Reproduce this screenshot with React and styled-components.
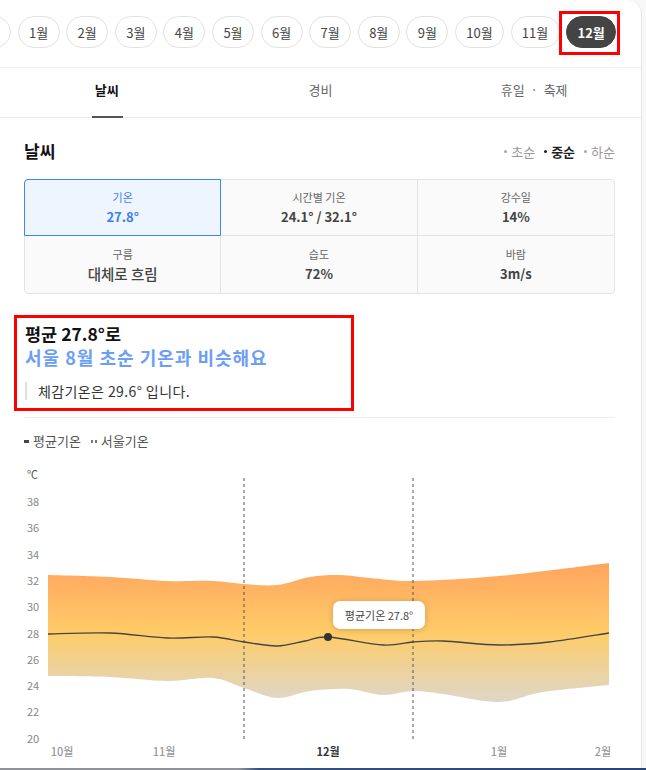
import styled, { createGlobalStyle } from 'styled-components';

const GlobalStyle = createGlobalStyle`
  html, body {
    margin: 0;
    padding: 0;
    background: #f8f8f8;
  }
  body {
    font-family: "Noto Sans CJK KR", "Noto Sans", sans-serif;
    color: #333;
  }
`

const Page = styled.div`
  width: 646px;
  height: 770px;
  overflow: hidden;
  display: flex;
  flex-direction: column;
`

const Card = styled.div`
  width: 641px;
  height: 768px;
  background: #fff;
  border-right: 1px solid #e4e4e4;
  border-top-right-radius: 14px;
  overflow: hidden;
`

const TaskLine = styled.div`
  height: 2px;
  background: linear-gradient(90deg, #8d9399 0%, #8d9399 37%, #35527f 40%, #27457a 100%);
`

const MonthBar = styled.div`
  display: flex;
  gap: 6.6px;
  padding: 16px 0 19px;
  margin-left: -31px;
  border-bottom: 1px solid #efefef;
  white-space: nowrap;
`

const Pill = styled.div`
  position: relative;
  flex: none;
  width: ${p => p.$w}px;
  height: 32px;
  box-sizing: border-box;
  border-radius: 16px;
  border: 1px solid ${p => (p.$on ? '#444' : '#e2e2e2')};
  background: ${p => (p.$on ? '#444' : '#fff')};
  color: ${p => (p.$on ? '#fff' : '#444')};
  font-size: 13px;
  font-weight: ${p => (p.$on ? 700 : 400)};
  display: flex;
  align-items: center;
  justify-content: center;
  line-height: 1;
`

const Mark = styled.span`
  position: absolute;
  left: -8px;
  right: -5px;
  top: -6px;
  bottom: -8px;
  border: 3px solid #f00;
  pointer-events: none;
`

const Tabs = styled.div`
  display: grid;
  grid-template-columns: repeat(3, 1fr);
  height: 49px;
  border-bottom: 1px solid #ececec;
`

const Tab = styled.div`
  position: relative;
  display: flex;
  align-items: center;
  justify-content: center;
  font-size: 13px;
  line-height: 1;
  padding-bottom: 6px;
  color: ${p => (p.$on ? '#111' : '#666')};
  font-weight: ${p => (p.$on ? 700 : 400)};

  &::after {
    content: '';
    display: ${p => (p.$on ? 'block' : 'none')};
    position: absolute;
    bottom: -1px;
    left: 50%;
    width: 31px;
    margin-left: -15px;
    height: 2px;
    background: #555;
  }
`

const Content = styled.div`
  padding: 0 26px 0 24px;
`

const HeadRow = styled.div`
  display: flex;
  align-items: center;
  justify-content: space-between;
  margin-top: 22px;
  height: 22px;
`

const Heading = styled.h2`
  margin: 0;
  font-size: 17px;
  font-weight: 700;
  color: #111;
  line-height: 22px;
`

const Periods = styled.div`
  display: flex;
  gap: 9px;
  font-size: 13px;
  line-height: 1;
`

const Period = styled.span`
  display: flex;
  align-items: center;
  gap: 4px;
  color: ${p => (p.$on ? '#222' : '#999')};
  font-weight: ${p => (p.$on ? 700 : 400)};

  &::before {
    content: '';
    width: 3px;
    height: 3px;
    border-radius: 50%;
    background: ${p => (p.$on ? '#222' : '#aaa')};
  }
`

const Table = styled.div`
  margin-top: 17px;
  display: grid;
  grid-template-columns: repeat(3, 1fr);
  grid-template-rows: 56px 57px;
  border: 1px solid #e3e3e3;
  border-radius: 4px;
  background: #fafafa;
`

const Cell = styled.div`
  display: flex;
  flex-direction: column;
  align-items: center;
  justify-content: center;
  gap: 4px;
  border-right: ${p => (p.$lastCol ? 'none' : '1px solid #e3e3e3')};
  border-bottom: ${p => (p.$lastRow ? 'none' : '1px solid #e3e3e3')};
  ${p => p.$on && `
    margin: -1px 0 0 -1px;
    border: 1px solid #3d86f5;
    border-top-left-radius: 4px;
    background: #eef5ff;
  `}
`

const Label = styled.span`
  font-size: 11px;
  line-height: 14px;
  color: ${p => (p.$on ? '#3d7ef0' : '#666')};
`

const Value = styled.span`
  font-size: ${p => (p.$big ? '14.5px' : '13px')};
  font-weight: ${p => (p.$big ? 500 : 700)};
  line-height: 17px;
  color: ${p => (p.$on ? '#3d7ef0' : '#444')};
`

const Summary = styled.div`
  margin: 21px 0 0 -10px;
  width: 340px;
  box-sizing: border-box;
  border: 3px solid #f00;
  padding: 5px 8px 8px;
`

const Title = styled.div`
  font-size: 17.5px;
  font-weight: 700;
  line-height: 22px;
  color: #111;
`

const Sub = styled.div`
  font-size: 18px;
  font-weight: 700;
  line-height: 24px;
  letter-spacing: 1px;
  color: #6d9ef6;
`

const Quote = styled.div`
  margin-top: 13px;
  font-size: 14px;
  line-height: 18px;
  letter-spacing: 0.4px;
  color: #333;
  border-left: 2px solid #dedede;
  padding-left: 11px;
`

const Divider = styled.div`
  margin-top: 6px;
  height: 1px;
  background: #ededed;
`

const Legend = styled.div`
  margin-top: 16px;
  display: flex;
  align-items: center;
  gap: 10px;
  font-size: 13px;
  line-height: 14px;
  color: #555;
`

const LegendItem = styled.span`
  display: flex;
  align-items: center;
  gap: 4px;
`

const Swatch = styled.span`
  display: inline-block;
  width: ${p => (p.$dots ? '6px' : '5px')};
  height: 3px;
  background: ${p => (p.$dots
    ? 'repeating-linear-gradient(90deg, #777 0 2px, transparent 2px 4px)'
    : '#444')};
`

const ChartWrap = styled.div`
  position: relative;
  margin-top: 11px;
  height: 308px;
`

const Tooltip = styled.div`
  position: absolute;
  left: 333px;
  top: 142px;
  width: 92px;
  height: 28px;
  border-radius: 7px;
  background: #fff;
  box-shadow: 0 1px 6px rgba(0, 0, 0, 0.18);
  display: flex;
  align-items: center;
  justify-content: center;
  font-size: 11px;
  color: #444;
`

const months = [
  ['', 42], ['1월', 42], ['2월', 42], ['3월', 42], ['4월', 42], ['5월', 42], ['6월', 42],
  ['7월', 42], ['8월', 42], ['9월', 42], ['10월', 49], ['11월', 49], ['12월', 50],
]

const cells = [
  { label: '기온', value: '27.8°', on: true },
  { label: '시간별 기온', value: '24.1° / 32.1°' },
  { label: '강수일', value: '14%' },
  { label: '구름', value: '대체로 흐림', big: true },
  { label: '습도', value: '72%' },
  { label: '바람', value: '3m/s' },
]

const top = [[48, 576], [110, 578], [167, 582], [213, 582], [244, 585], [277, 586], [310, 578], [340, 576], [370, 579], [413, 582], [499, 577], [609, 564]]
const bottom = [[48, 677], [110, 678], [167, 682], [213, 679], [244, 689], [277, 699], [310, 692], [349, 690], [383, 696], [413, 692], [443, 695], [499, 703], [543, 693], [609, 686]]
const mean = [[48, 635], [110, 634], [167, 639], [213, 638], [244, 643], [277, 647], [305, 642], [328, 638], [383, 646], [413, 643], [443, 642], [499, 646], [549, 643], [609, 634]]

function curve(pts) {
  let d = ''
  for (let i = 0; i < pts.length - 1; i++) {
    const p0 = pts[i - 1] || pts[i]
    const p1 = pts[i]
    const p2 = pts[i + 1]
    const p3 = pts[i + 2] || p2
    const c1 = [p1[0] + (p2[0] - p0[0]) / 6, p1[1] + (p2[1] - p0[1]) / 6]
    const c2 = [p2[0] - (p3[0] - p1[0]) / 6, p2[1] - (p3[1] - p1[1]) / 6]
    d += ` C${c1[0].toFixed(1)},${c1[1].toFixed(1)} ${c2[0].toFixed(1)},${c2[1].toFixed(1)} ${p2[0]},${p2[1]}`
  }
  return d
}

const rev = [...bottom].reverse()
const bandPath = `M${top[0][0]},${top[0][1]}${curve(top)} L${rev[0][0]},${rev[0][1]}${curve(rev)} Z`
const meanPath = `M${mean[0][0]},${mean[0][1]}${curve(mean)}`

const yTicks = [38, 36, 34, 32, 30, 28, 26, 24, 22, 20]
const xTicks = [['10월', 62], ['11월', 164], ['12월', 328, true], ['1월', 499], ['2월', 603]]

const Chart = () => (
  <ChartWrap>
    <svg width="642" height="308" viewBox="0 460 642 308" style={{ display: 'block' }}>
      <defs>
        <linearGradient id="band" x1="0" y1="564" x2="0" y2="704" gradientUnits="userSpaceOnUse">
          <stop offset="0" stopColor="#ffa45e" />
          <stop offset="0.5" stopColor="#ffcc68" />
          <stop offset="1" stopColor="#ddd7ca" />
        </linearGradient>
      </defs>
      <text x="27" y="480" fontSize="11" fill="#555">℃</text>
      {yTicks.map((t, i) => (
        <text key={t} x="27" y={507 + i * 26.3} fontSize="11" fill="#888">{t}</text>
      ))}
      <path d={bandPath} fill="url(#band)" />
      <line x1="244" y1="479" x2="244" y2="741" stroke="#555" strokeDasharray="3 3" />
      <line x1="413" y1="479" x2="413" y2="741" stroke="#555" strokeDasharray="3 3" />
      <path d={meanPath} fill="none" stroke="#444" strokeWidth="1.4" />
      <circle cx="328" cy="638" r="4" fill="#333" />
      {xTicks.map(([t, x, on]) => (
        <text key={t} x={x} y="757" fontSize="11" textAnchor="middle"
          fill={on ? '#333' : '#999'} fontWeight={on ? 700 : 500}>{t}</text>
      ))}
    </svg>
    <Tooltip>평균기온 27.8°</Tooltip>
  </ChartWrap>
)

const App = () => {
  return (
    <Page>
      <GlobalStyle />
      <Card>
        <MonthBar>
          {months.map(([m, w], i) => (
            <Pill key={i} $w={w} $on={m === '12월'}>
              {m}
              {m === '12월' && <Mark />}
            </Pill>
          ))}
        </MonthBar>

        <Tabs>
          <Tab $on>날씨</Tab>
          <Tab>경비</Tab>
          <Tab>휴일&nbsp;&nbsp;·&nbsp;&nbsp;축제</Tab>
        </Tabs>

        <Content>
          <HeadRow>
            <Heading>날씨</Heading>
            <Periods>
              <Period>초순</Period>
              <Period $on>중순</Period>
              <Period>하순</Period>
            </Periods>
          </HeadRow>

          <Table>
            {cells.map((c, i) => (
              <Cell key={c.label} $on={c.on} $lastCol={i % 3 === 2} $lastRow={i >= 3}>
                <Label $on={c.on}>{c.label}</Label>
                <Value $on={c.on} $big={c.big}>{c.value}</Value>
              </Cell>
            ))}
          </Table>

          <Summary>
            <Title>평균 27.8°로</Title>
            <Sub>서울 8월 초순 기온과 비슷해요</Sub>
            <Quote>체감기온은 29.6° 입니다.</Quote>
          </Summary>

          <Divider />

          <Legend>
            <LegendItem><Swatch />평균기온</LegendItem>
            <LegendItem><Swatch $dots />서울기온</LegendItem>
          </Legend>
        </Content>

        <Chart />
      </Card>
      <TaskLine />
    </Page>
  )
}

export default App
